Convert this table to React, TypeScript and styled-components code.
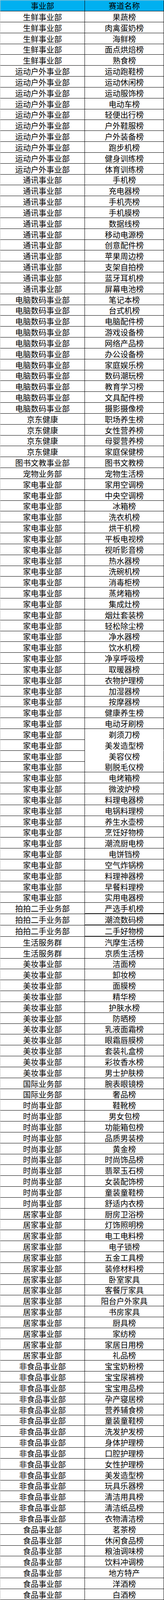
import React from "react";
import styled, { createGlobalStyle } from "styled-components";

const Global = createGlobalStyle`
  html, body { margin: 0; padding: 0; background: #ffffff; }
  body { font-family: "Noto Sans CJK SC", "Noto Sans", sans-serif; }
`;

const groups: [string, string[]][] = [
  ["生鲜事业部", ["果蔬榜", "肉禽蛋奶榜", "海鲜榜", "面点烘焙榜", "熟食榜"]],
  ["运动户外事业部", ["运动跑鞋榜", "运动休闲榜", "运动服饰榜", "电动车榜", "轻便出行榜", "户外鞋服榜", "户外装备榜", "跑步机榜", "健身训练榜", "体育训练榜"]],
  ["通讯事业部", ["手机榜", "充电器榜", "手机壳榜", "手机膜榜", "数据线榜", "移动电源榜", "创意配件榜", "苹果周边榜", "支架自拍榜", "蓝牙耳机榜", "屏幕电池榜"]],
  ["电脑数码事业部", ["笔记本榜", "台式机榜", "电脑配件榜", "游戏设备榜", "网络产品榜", "办公设备榜", "家庭娱乐榜", "数码潮玩榜", "教育学习榜", "文具配件榜", "摄影摄像榜"]],
  ["京东健康", ["职场养生榜", "女性营养榜", "母婴营养榜", "家庭保健榜"]],
  ["图书文教事业部", ["图书文教榜"]],
  ["宠物业务部", ["宠物生活榜"]],
  ["家电事业部", ["家用空调榜", "中央空调榜", "冰箱榜", "洗衣机榜", "烘干机榜", "平板电视榜", "视听影音榜", "热水器榜", "洗碗机榜", "消毒柜榜", "蒸烤箱榜", "集成灶榜", "烟灶套装榜", "轻松除尘榜", "净水器榜", "饮水机榜", "净享呼吸榜", "取暖器榜", "衣物护理榜", "加湿器榜", "按摩器榜", "健康养生榜", "电动牙刷榜", "剃须刀榜", "美发造型榜", "美容仪榜", "剔脱毛仪榜", "电烤箱榜", "微波炉榜", "料理电器榜", "电锅料理榜", "养生水壶榜", "烹饪好物榜", "潮流厨电榜", "电饼铛榜", "空气炸锅榜", "料理神器榜", "早餐料理榜", "实用电器榜"]],
  ["拍拍二手业务部", ["严选手机榜", "潮流数码榜", "二手好物榜"]],
  ["生活服务群", ["汽摩生活榜", "京质生活榜"]],
  ["美妆事业部", ["洁面榜", "卸妆榜", "面膜榜", "精华榜", "护肤水榜", "防晒榜", "乳液面霜榜", "眼霜唇膜榜", "套装礼盒榜", "彩妆香水榜", "男士护肤榜"]],
  ["国际业务部", ["腕表眼镜榜", "奢品榜"]],
  ["时尚事业部", ["鞋靴榜", "男女包榜", "功能箱包榜", "品质男装榜", "黄金榜", "时尚饰品榜", "翡翠玉石榜", "女装配饰榜", "童装童鞋榜", "舒适内衣榜"]],
  ["居家事业部", ["厨房卫浴榜", "灯饰照明榜", "电工电料榜", "电子锁榜", "五金工具榜", "装修材料榜", "卧室家具", "客餐厅家具", "阳台户外家具", "书房家具", "厨具榜", "家纺榜", "家居日用榜", "礼品榜"]],
  ["非食品事业部", ["宝宝奶粉榜", "宝宝尿裤榜", "宝宝用品榜", "孕产寝居榜", "营养辅食榜", "童装童鞋榜", "洗发护发榜", "身体护理榜", "口腔护理榜", "女性护理榜", "美发造型榜", "玩具乐器榜", "清洁用具榜", "清洁纸品榜", "衣物清洁榜"]],
  ["食品事业部", ["茗茶榜", "休闲食品榜", "粮油调味榜", "饮料冲调榜", "地方特产", "洋酒榜", "白酒榜"]],
];

type RowData = { dept: string; track: string; thick: boolean; open: boolean; h: number };

const openTracks = ["剃须刀榜", "美发造型榜", "美容仪榜"];

/* The capture is 4096px tall: 24 rows are drawn 1px shorter, spread evenly,
   so the whole sheet (including the last row) stays visible. */
const rows: RowData[] = [];
groups.forEach(([dept, items]) => {
  items.forEach((track) => {
    const i = rows.length;
    const short = i % 6 === 3 && i <= 141;
    const thick = dept === "拍拍二手业务部";
    rows.push({
      dept,
      track,
      thick,
      open: dept === "家电事业部" && openTracks.includes(track),
      h: (short ? 27 : 28) + (thick ? 1 : 0),
    });
  });
});

const Sheet = styled.div`
  width: 420px;
  border-left: 1px solid #c6c6c6;
  border-top: 1px solid #c6c6c6;
  display: flex;
  flex-direction: column;
`;

const Row = styled.div<{ $h: number }>`
  display: grid;
  grid-template-columns: 217px 203px;
  height: ${(p) => p.$h}px;
`;

const HeadRow = styled.div`
  display: grid;
  grid-template-columns: 217px 203px;
  height: 28px;
  background: #00b0f0;
`;

const HeadCell = styled.div`
  box-sizing: border-box;
  border-bottom: 1px solid #000;
  border-right: 1px solid #000;
  padding-top: 1px;
  display: flex;
  align-items: center;
  justify-content: center;
  font-size: 20px;
  font-weight: 400;
  color: #000;
  line-height: 24px;
`;

const Cell = styled.div<{ $thick?: boolean; $open?: boolean }>`
  box-sizing: border-box;
  height: 100%;
  border-right: 1px solid #000;
  border-bottom: ${(p) =>
    p.$open ? "1px solid #ffffff" : p.$thick ? "2px solid #000" : "1px solid #000"};
  padding-top: 2px;
  display: flex;
  align-items: center;
  justify-content: center;
  font-size: 20px;
  font-weight: 400;
  color: #000;
  line-height: 24px;
  white-space: nowrap;
  overflow: hidden;
`;

const DeptCell = styled(Cell)`
  border-bottom: 1px solid #000;
`;

export default function App() {
  return (
    <>
      <Global />
      <Sheet>
        <HeadRow>
          <HeadCell>事业部</HeadCell>
          <HeadCell>赛道名称</HeadCell>
        </HeadRow>
        {rows.map((r, i) => (
          <Row key={i} $h={r.h}>
            <DeptCell>{r.dept}</DeptCell>
            <Cell $thick={r.thick} $open={r.open}>
              {r.track}
            </Cell>
          </Row>
        ))}
      </Sheet>
    </>
  );
}
